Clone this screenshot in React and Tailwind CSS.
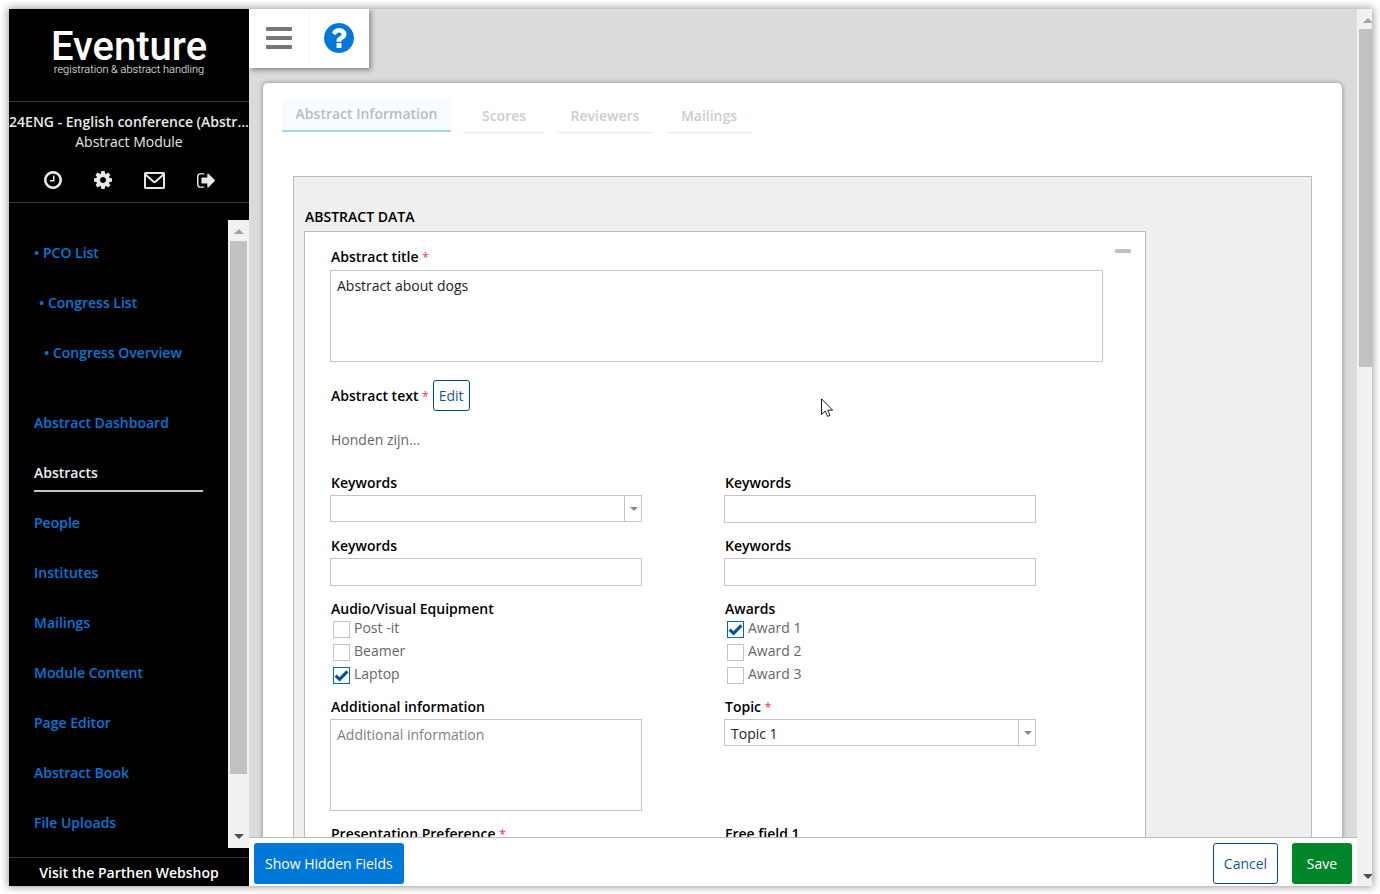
import clsx from "clsx";

const crumbs = [
  { label: "• PCO List", indent: "pl-[25px]" },
  { label: "• Congress List", indent: "pl-[30px]" },
  { label: "• Congress Overview", indent: "pl-[35px]" },
];

const menu = [
  "Abstract Dashboard",
  "Abstracts",
  "People",
  "Institutes",
  "Mailings",
  "Module Content",
  "Page Editor",
  "Abstract Book",
  "File Uploads",
];

function ClockIcon() {
  return (
    <svg viewBox="0 128 1536 1536" className="size-[18px]" fill="currentColor">
      <path d="M896 544v448q0 14-9 23t-23 9h-320q-14 0-23-9t-9-23v-64q0-14 9-23t23-9h224v-352q0-14 9-23t23-9h64q14 0 23 9t9 23zm416 352q0-148-73-273t-198-198-273-73-273 73-198 198-73 273 73 273 198 198 273 73 273-73 198-198 73-273zm224 0q0 209-103 385.5t-279.5 279.5-385.5 103-385.5-103-279.5-279.5-103-385.5 103-385.5 279.5-279.5 385.5-103 385.5 103 279.5 279.5 103 385.5z" />
    </svg>
  );
}

function CogIcon() {
  return (
    <svg viewBox="0 128 1536 1536" className="size-[18px]" fill="currentColor">
      <path d="M1024 896q0-106-75-181t-181-75-181 75-75 181 75 181 181 75 181-75 75-181zm512-109v222q0 12-8 23t-20 13l-185 28q-19 54-39 91 35 50 107 138 10 12 10 25t-9 23q-27 37-99 108t-94 71q-12 0-26-9l-138-108q-44 23-91 38-16 136-29 186-7 28-36 28h-222q-14 0-24.5-8.5t-11.5-21.5l-28-184q-49-16-90-37l-141 107q-10 9-25 9-14 0-25-11-126-114-165-168-7-10-7-23 0-12 8-23 15-21 51-66.5t54-70.5q-27-50-41-99l-183-27q-13-2-21-12.5t-8-23.5v-222q0-12 8-23t19-13l186-28q14-46 39-92-40-57-107-138-10-12-10-24 0-10 9-23 26-36 98.5-107.5t94.5-71.5q13 0 26 10l138 107q44-23 91-38 16-136 29-186 7-28 36-28h222q14 0 24.5 8.5t11.5 21.5l28 184q49 16 90 37l142-107q9-9 24-9 13 0 25 10 129 119 165 170 7 8 7 22 0 12-8 23-15 21-51 66.5t-54 70.5q26 50 41 98l183 28q13 2 21 12.5t8 23.5z" />
    </svg>
  );
}

function MailIcon() {
  return (
    <svg viewBox="0 0 21 17" className="h-[17px] w-[21px]" fill="none" stroke="currentColor" strokeWidth="2">
      <rect x="1" y="1" width="19" height="15" rx="0.5" />
      <path d="M1.5 2.5 L9.3 9.6 Q10.5 10.6 11.7 9.6 L19.5 2.5" />
    </svg>
  );
}

function SignOutIcon() {
  return (
    <svg viewBox="0 256 1568 1280" className="h-[15px] w-[18px]" fill="currentColor">
      <path d="M640 1440q0 4 1 20t.5 26.5-3 23.5-10 19.5-20.5 6.5h-320q-119 0-203.5-84.5t-84.5-203.5v-704q0-119 84.5-203.5t203.5-84.5h320q13 0 22.5 9.5t9.5 22.5q0 4 1 20t.5 26.5-3 23.5-10 19.5-20.5 6.5h-320q-66 0-113 47t-47 113v704q0 66 47 113t113 47h312l11.5 1 11.5 3 8 5.5 7 9 2 13.5zm928-544q0 26-19 45l-544 544q-19 19-45 19t-45-19-19-45v-288h-448q-26 0-45-19t-19-45v-384q0-26 19-45t45-19h448v-288q0-26 19-45t45-19 45 19l544 544q19 19 19 45z" />
    </svg>
  );
}

function HelpIcon() {
  return (
    <svg viewBox="128 128 1536 1536" className="size-[30px]" fill="#0078d7">
      <path d="M1024 1376v-192q0-14-9-23t-23-9h-192q-14 0-23 9t-9 23v192q0 14 9 23t23 9h192q14 0 23-9t9-23zm256-672q0-88-55.5-163t-138.5-116-170-41q-243 0-371 213-15 24 8 42l132 100q7 6 19 6 16 0 25-12 53-68 86-92 34-24 86-24 48 0 85.5 26t37.5 59q0 38-20 61t-68 45q-63 28-115.5 86.5t-52.5 125.5v36q0 14 9 23t23 9h192q14 0 23-9t9-23q0-19 21.5-49.5t54.5-49.5q32-18 49-28.5t46-35 44.5-48 28-60.5 12.5-81zm384 192q0 209-103 385.5t-279.5 279.5-385.5 103-385.5-103-279.5-279.5-103-385.5 103-385.5 279.5-279.5 385.5-103 385.5 103 279.5 279.5 103 385.5z" />
    </svg>
  );
}

function Arrow({ up, className = "h-[5px] w-[10px]" }) {
  return (
    <svg viewBox="0 0 10 5" className={clsx("shrink-0", className)} fill="currentColor">
      <path d={up ? "M0 5 L5 0 L10 5Z" : "M0 0 L10 0 L5 5Z"} />
    </svg>
  );
}

function Star() {
  return <span className="text-xs font-normal text-red-500">*</span>;
}

function FieldLabel({ id, required, children }) {
  return (
    <label htmlFor={id} className="block pl-px leading-[18px] font-semibold text-black">
      {children} {required && <Star />}
    </label>
  );
}

function TextField({ id, label }) {
  return (
    <div>
      <FieldLabel id={id}>{label}</FieldLabel>
      <input id={id} type="text" className="mt-[3px] block h-7 w-full border border-[#c4c4c4] bg-white px-1.5" />
    </div>
  );
}

function SelectField({ id, label, required, options }) {
  return (
    <div>
      <FieldLabel id={id} required={required}>{label}</FieldLabel>
      <div className="relative mt-[3px] mb-px">
        <select id={id} className="block h-[27px] w-full appearance-none border border-[#c4c4c4] bg-white px-1.5 pt-0.5 text-[#222]">
          {options.map((option) => (
            <option key={option}>{option}</option>
          ))}
        </select>
        <span className="pointer-events-none absolute inset-y-0 right-0 flex w-[18px] items-center justify-center border-l border-[#c4c4c4] text-[#888]">
          <Arrow className="h-1 w-2" />
        </span>
      </div>
    </div>
  );
}

function CheckGroup({ legend, items }) {
  return (
    <fieldset>
      <legend className="block pl-px leading-[18px] font-semibold text-black">{legend}</legend>
      <div className="flex flex-col gap-[3px] pl-[3px]">
        {items.map(({ label, checked }) => (
          <label key={label} className="relative flex h-5 items-end gap-1 text-[#666]">
            <input
              type="checkbox"
              defaultChecked={checked}
              className="peer size-[17px] appearance-none border border-[#c4c4c4] bg-white checked:border-[#0067b8]"
            />
            <svg viewBox="0 0 17 17" className="pointer-events-none absolute bottom-0 left-0 hidden size-[17px] peer-checked:block" fill="none" stroke="#00539b" strokeWidth="3">
              <path d="M2.6 8.6 L6.6 12.4 L14.4 4.4" />
            </svg>
            <span className="h-5 leading-5">{label}</span>
          </label>
        ))}
      </div>
    </fieldset>
  );
}

function Sidebar() {
  return (
    <aside className="flex w-[240px] shrink-0 flex-col bg-black text-[#e8e8e8]">
      <div className="flex h-[93px] shrink-0 flex-col items-center border-b border-[#3a3a3a] pt-5 font-[Roboto,sans-serif] text-white">
        <span className="text-[40px] leading-9 font-medium">Eventure</span>
        <span className="text-[11px] leading-[10px] font-light">registration &amp; abstract handling</span>
      </div>

      <div className="flex h-[101px] shrink-0 flex-col items-center border-b border-[#3a3a3a] pt-[10px]">
        <strong className="leading-5 font-semibold whitespace-nowrap">24ENG - English conference (Abstr...</strong>
        <span className="leading-5">Abstract Module</span>
        <div className="mt-[18px] flex h-5 w-full items-center justify-between pr-[34px] pl-[35px]">
          <button aria-label="History"><ClockIcon /></button>
          <button aria-label="Settings"><CogIcon /></button>
          <button aria-label="Messages"><MailIcon /></button>
          <button aria-label="Sign out"><SignOutIcon /></button>
        </div>
      </div>

      <div className="mt-[17px] mb-[9px] flex min-h-0 flex-1">
        <nav className="flex-1 overflow-hidden pt-4 font-semibold text-[#0078d7]">
          <ul className="flex flex-col gap-[14px]">
            {crumbs.map(({ label, indent }) => (
              <li key={label} className={indent}>
                <a href="#" className="block h-9 leading-[34px]">{label}</a>
              </li>
            ))}
          </ul>
          <ul className="mt-[34px] flex flex-col gap-[14px] pr-[25px] pl-[25px]">
            {menu.map((label) => (
              <li key={label}>
                <a
                  href="#"
                  className={clsx(
                    "block h-9 border-b-2 leading-[34px]",
                    label === "Abstracts" ? "border-[#c4c4c4] text-[#eee]" : "border-transparent"
                  )}
                >
                  {label}
                </a>
              </li>
            ))}
          </ul>
        </nav>
        <div className="flex w-[21px] flex-col items-center bg-[#f1f1f1]">
          <div className="flex h-[21px] items-center pt-0.5 text-[#a3a3a3]"><Arrow up /></div>
          <div className="w-[17px] flex-[533] bg-[#c1c1c1]" />
          <div className="flex-[53]" />
          <div className="flex h-[21px] items-center pb-0.5 text-[#505050]"><Arrow /></div>
        </div>
      </div>

      <a href="#" className="h-[29px] shrink-0 border-t border-[#3a3a3a] text-center leading-[30px] font-semibold text-white">
        Visit the Parthen Webshop
      </a>
    </aside>
  );
}

function Tabs() {
  return (
    <div className="flex gap-[14px] pl-[19px] font-semibold text-[#ccc]">
      <button className="h-[34px] w-[169px] rounded-t border-b-2 border-[#a9d3f2] bg-[#f8fcff] pb-px text-[#bbb]">
        Abstract Information
      </button>
      <button className="h-[35px] w-[78px] border-b border-[#e6e6e6] pt-[2px]">Scores</button>
      <button className="h-[35px] w-24 border-b border-[#e6e6e6] pt-[2px]">Reviewers</button>
      <button className="h-[35px] w-[84px] border-b border-[#e6e6e6] pt-[2px]">Mailings</button>
    </div>
  );
}

function AbstractForm() {
  return (
    <form className="w-full max-w-[842px] border border-[#bbb] bg-white pt-4 pb-6 pl-[25px]">
      <div className="flex items-start justify-between pr-[14px]">
        <FieldLabel id="title" required>Abstract title</FieldLabel>
        <button type="button" aria-label="Collapse" className="mt-px h-1 w-4 rounded-[1px] bg-[#c1c1c1]" />
      </div>
      <div className="pr-[42px]">
        <textarea
          id="title"
          defaultValue="Abstract about dogs"
          className="mt-1 block h-[92px] w-full resize-none border border-[#c4c4c4] px-[6px] py-[5px] leading-5 text-[#222]"
        />
      </div>

      <div className="mt-[18px] flex items-center gap-1">
        <span className="pl-px leading-[18px] font-semibold text-black">Abstract text <Star /></span>
        <button type="button" className="h-[31px] rounded-[3px] border border-[#004b8d] px-[5px] text-[#1d5594]">Edit</button>
      </div>
      <p className="mt-5 pl-px leading-[18px] text-[#666]">Honden zijn...</p>

      <div className="mt-[25px] grid grid-cols-[312px_312px] gap-x-[82px] gap-y-[14px]">
        <SelectField id="kw1" label="Keywords" options={[""]} />
        <TextField id="kw2" label="Keywords" />
        <TextField id="kw3" label="Keywords" />
        <TextField id="kw4" label="Keywords" />
        <CheckGroup
          legend="Audio/Visual Equipment"
          items={[{ label: "Post -it" }, { label: "Beamer" }, { label: "Laptop", checked: true }]}
        />
        <CheckGroup
          legend="Awards"
          items={[{ label: "Award 1", checked: true }, { label: "Award 2" }, { label: "Award 3" }]}
        />
        <div>
          <FieldLabel id="info">Additional information</FieldLabel>
          <textarea
            id="info"
            placeholder="Additional information"
            className="mt-[3px] block h-[92px] w-full resize-none border border-[#c4c4c4] px-[6px] py-[5px] leading-5 placeholder:text-[#808080]"
          />
        </div>
        <SelectField id="topic" label="Topic" required options={["Topic 1"]} />
        <SelectField id="preference" label="Presentation Preference" required options={[""]} />
        <TextField id="free1" label="Free field 1" />
      </div>
    </form>
  );
}

function App() {
  return (
    <div className="h-screen bg-white pt-[9px] pr-2 pb-2 pl-[9px] font-['Open_Sans',sans-serif] text-sm">
      <div className="relative flex h-full shadow-[0_0_8px_1px_rgba(0,0,0,0.4)]">
        <Sidebar />

        <div className="flex min-w-0 flex-1 flex-col bg-[#dbdbdb]">
          <main className="min-h-0 flex-1 overflow-hidden">
            <div className="flex h-[59px] w-[120px] bg-white pb-0.5 shadow-[2px_2px_5px_rgba(0,0,0,0.4)]">
              <button aria-label="Menu" className="flex flex-1 flex-col items-center justify-center gap-[5px] border-r border-[#f6f6f6]">
                <span className="h-1 w-[26px] rounded-[1px] bg-[#777]" />
                <span className="h-1 w-[26px] rounded-[1px] bg-[#777]" />
                <span className="h-1 w-[26px] rounded-[1px] bg-[#777]" />
              </button>
              <button aria-label="Help" className="flex flex-1 items-center justify-center">
                <HelpIcon />
              </button>
            </div>

            <section className="mt-[15px] mr-[15px] ml-[14px] rounded-[5px] bg-white pt-[15px] pb-8 shadow-[0_0_5px_rgba(0,0,0,0.4)]">
              <Tabs />
              <div className="mt-[43px] mr-[30px] ml-[30px] border border-[#bbb] bg-[#efefef] px-[10px] pt-[30px] pb-8">
                <h2 className="pb-[4px] pl-px leading-5 font-semibold text-black">ABSTRACT DATA</h2>
                <AbstractForm />
              </div>
            </section>
          </main>

          <footer className="flex h-[49px] shrink-0 items-center gap-[14px] border-t border-[#bbb] bg-white px-[5px] pt-[3px]">
            <button className="mr-auto h-[41px] rounded-[3px] bg-[#0078d7] px-[11px] text-white">Show Hidden Fields</button>
            <button className="h-[41px] w-[65px] rounded-[3px] border border-[#004b8d] bg-white text-[#1d5594]">Cancel</button>
            <button className="h-[41px] w-[60px] rounded-[3px] bg-[#008529] text-white">Save</button>
          </footer>
        </div>

        {/* page scrollbar */}
        <div className="flex w-[15px] shrink-0 flex-col overflow-hidden bg-[#f1f1f1] pl-0.5">
          <div className="flex h-5 items-center pt-0.5 pl-1 text-[#a3a3a3]"><Arrow up /></div>
          <div className="flex-[338] bg-[#c1c1c1]" />
          <div className="flex-[499]" />
          <div className="flex h-5 items-center pl-1 text-[#505050]"><Arrow /></div>
        </div>

        {/* mouse pointer */}
        <svg viewBox="0 0 12 19" className="pointer-events-none absolute top-[389px] left-[812px] h-[19px] w-3" fill="#fff" stroke="#1a1a26">
          <path d="M0.5 0.8 V16.5 L4.2 13 L6.6 18.4 L9 17.4 L6.8 12.2 H11.6 Z" />
        </svg>
      </div>
    </div>
  );
}

export default App;
